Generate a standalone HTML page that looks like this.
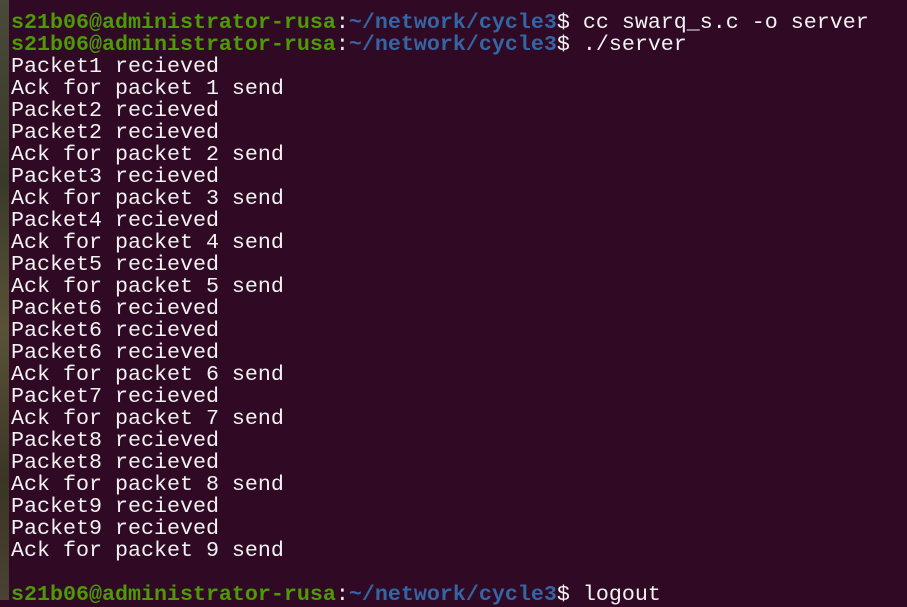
<!DOCTYPE html>
<html><head><meta charset="utf-8"><style>
html,body{margin:0;padding:0;width:907px;height:600px;overflow:hidden;background:#300a24;}
#strip{position:absolute;left:0;top:0;width:9px;height:600px;background:linear-gradient(#4a4a3a,#3a3a2a 30%,#5a5238 55%,#3b3526 80%,#4a4232);}
#t{position:absolute;left:11px;top:-10px;font-family:"Liberation Mono",monospace;font-size:21.67px;line-height:22px;color:#f2f2f2;white-space:pre;margin:0;}
.g{color:#4e9a06;font-weight:bold}.b{color:#3465a4;font-weight:bold}
</style></head><body><div id="strip"></div><pre id="t"> ~
<span class="g">s21b06@administrator-rusa</span>:<span class="b">~/network/cycle3</span>$ cc swarq_s.c -o server
<span class="g">s21b06@administrator-rusa</span>:<span class="b">~/network/cycle3</span>$ ./server
Packet1 recieved
Ack for packet 1 send
Packet2 recieved
Packet2 recieved
Ack for packet 2 send
Packet3 recieved
Ack for packet 3 send
Packet4 recieved
Ack for packet 4 send
Packet5 recieved
Ack for packet 5 send
Packet6 recieved
Packet6 recieved
Packet6 recieved
Ack for packet 6 send
Packet7 recieved
Ack for packet 7 send
Packet8 recieved
Packet8 recieved
Ack for packet 8 send
Packet9 recieved
Packet9 recieved
Ack for packet 9 send

<span class="g">s21b06@administrator-rusa</span>:<span class="b">~/network/cycle3</span>$ logout</pre></body></html>
